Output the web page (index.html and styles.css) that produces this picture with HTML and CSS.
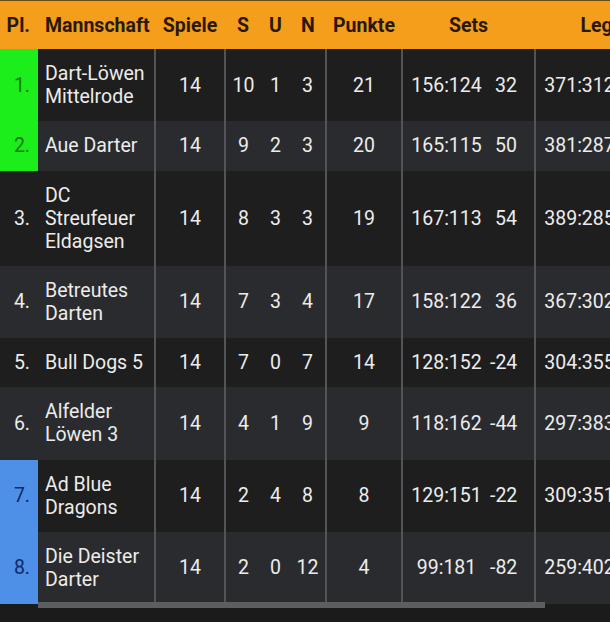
FILE: index.html
```html
<!DOCTYPE html>
<html lang="de">
<head>
<meta charset="utf-8">
<title>Tabelle</title>
<link rel="stylesheet" href="styles.css">
</head>
<body>
<div class="frame">
  <div class="scroller">
    <table class="standings">
      <colgroup>
        <col class="c-pl"><col class="c-team"><col class="c-sp"><col class="c-s"><col class="c-u"><col class="c-n"><col class="c-pt"><col class="c-sets"><col class="c-diff"><col class="c-legs"><col class="c-ldiff">
      </colgroup>
      <thead>
        <tr>
          <th class="pl">Pl.</th>
          <th class="team">Mannschaft</th>
          <th>Spiele</th>
          <th>S</th>
          <th>U</th>
          <th>N</th>
          <th>Punkte</th>
          <th colspan="2">Sets</th>
          <th colspan="2">Legs</th>
        </tr>
      </thead>
      <tbody>
        <tr class="dark">
          <td class="pl up">1.</td><td class="team">Dart-Löwen Mittelrode</td><td class="sp">14</td><td class="s">10</td><td>1</td><td class="n">3</td><td class="pt">21</td><td class="sets">156:124</td><td class="diff">32</td><td class="legs">371:312</td><td class="diff">59</td>
        </tr>
        <tr class="light">
          <td class="pl up">2.</td><td class="team">Aue Darter</td><td class="sp">14</td><td class="s">9</td><td>2</td><td class="n">3</td><td class="pt">20</td><td class="sets">165:115</td><td class="diff">50</td><td class="legs">381:287</td><td class="diff">94</td>
        </tr>
        <tr class="dark">
          <td class="pl">3.</td><td class="team">DC Streufeuer Eldagsen</td><td class="sp">14</td><td class="s">8</td><td>3</td><td class="n">3</td><td class="pt">19</td><td class="sets">167:113</td><td class="diff">54</td><td class="legs">389:285</td><td class="diff">104</td>
        </tr>
        <tr class="light">
          <td class="pl">4.</td><td class="team">Betreutes Darten</td><td class="sp">14</td><td class="s">7</td><td>3</td><td class="n">4</td><td class="pt">17</td><td class="sets">158:122</td><td class="diff">36</td><td class="legs">367:302</td><td class="diff">65</td>
        </tr>
        <tr class="dark">
          <td class="pl">5.</td><td class="team">Bull Dogs 5</td><td class="sp">14</td><td class="s">7</td><td>0</td><td class="n">7</td><td class="pt">14</td><td class="sets">128:152</td><td class="diff">-24</td><td class="legs">304:355</td><td class="diff">-51</td>
        </tr>
        <tr class="light">
          <td class="pl">6.</td><td class="team">Alfelder Löwen 3</td><td class="sp">14</td><td class="s">4</td><td>1</td><td class="n">9</td><td class="pt">9</td><td class="sets">118:162</td><td class="diff">-44</td><td class="legs">297:383</td><td class="diff">-86</td>
        </tr>
        <tr class="dark">
          <td class="pl down">7.</td><td class="team">Ad Blue Dragons</td><td class="sp">14</td><td class="s">2</td><td>4</td><td class="n">8</td><td class="pt">8</td><td class="sets">129:151</td><td class="diff">-22</td><td class="legs">309:351</td><td class="diff">-42</td>
        </tr>
        <tr class="light">
          <td class="pl down">8.</td><td class="team">Die Deister Darter</td><td class="sp">14</td><td class="s">2</td><td>0</td><td class="n">12</td><td class="pt">4</td><td class="sets">99:181</td><td class="diff">-82</td><td class="legs">259:402</td><td class="diff">-143</td>
        </tr>
      </tbody>
    </table>
    <div class="scrollbar"><div class="thumb"></div></div>
  </div>
</div>
</body>
</html>
```
FILE: styles.css
```css
html, body {
  margin: 0;
  padding: 0;
  background: #1b1b1c;
}
body {
  font-family: Roboto, "Liberation Sans", sans-serif;
  font-size: 19.5px;
  color: #ececec;
}
.frame {
  width: 610px;
  height: 622px;
  overflow: hidden;
  border-top: 1px solid #6b4d17;
  box-sizing: border-box;
}
.scroller {
  position: relative;
  width: 668px;
}
.standings {
  border-collapse: collapse;
  table-layout: fixed;
  width: 668px;
}
.c-pl { width: 38px; }
.c-team { width: 117px; }
.c-sp { width: 70px; }
.c-s { width: 36px; }
.c-u { width: 29px; }
.c-n { width: 36px; }
.c-pt { width: 76px; }
.c-sets { width: 88px; }
.c-diff { width: 45px; }
.c-legs { width: 88px; }
.c-ldiff { width: 45px; }

thead th {
  background: #f59e1c;
  color: #2a1806;
  font-weight: 700;
  height: 48px;
  padding: 0;
  text-align: center;
  white-space: nowrap;
  box-sizing: border-box;
}
thead th.pl { text-align: right; padding-right: 8px; }
thead th.team { text-align: left; padding-left: 7px; }

tbody td {
  padding: 13px 0 13.25px;
  line-height: 23px;
  text-align: center;
  vertical-align: middle;
  white-space: nowrap;
}
tbody tr.dark td { background: #1e1e1f; }
tbody tr.light td { background: #2a2b2e; }

tbody td.pl { text-align: right; padding-right: 8px; }
tbody tr td.pl.up { background: #1bee1b; color: #0d7a0d; }
tbody tr td.pl.down { background: #4e8fe8; color: #0f2a66; }
tbody td.team { text-align: left; padding-left: 7px; white-space: normal; }

td.sp, td.s, td.pt, td.sets, td.legs {
  border-left: 2px solid #535457;
}
td.diff { text-align: right; padding-right: 17px; }

.scrollbar {
  position: absolute;
  left: 38px;
  right: 0;
  bottom: -4px;
  height: 6px;
}
.thumb {
  width: 507px;
  height: 6px;
  background: #5d5e60;
}
```
